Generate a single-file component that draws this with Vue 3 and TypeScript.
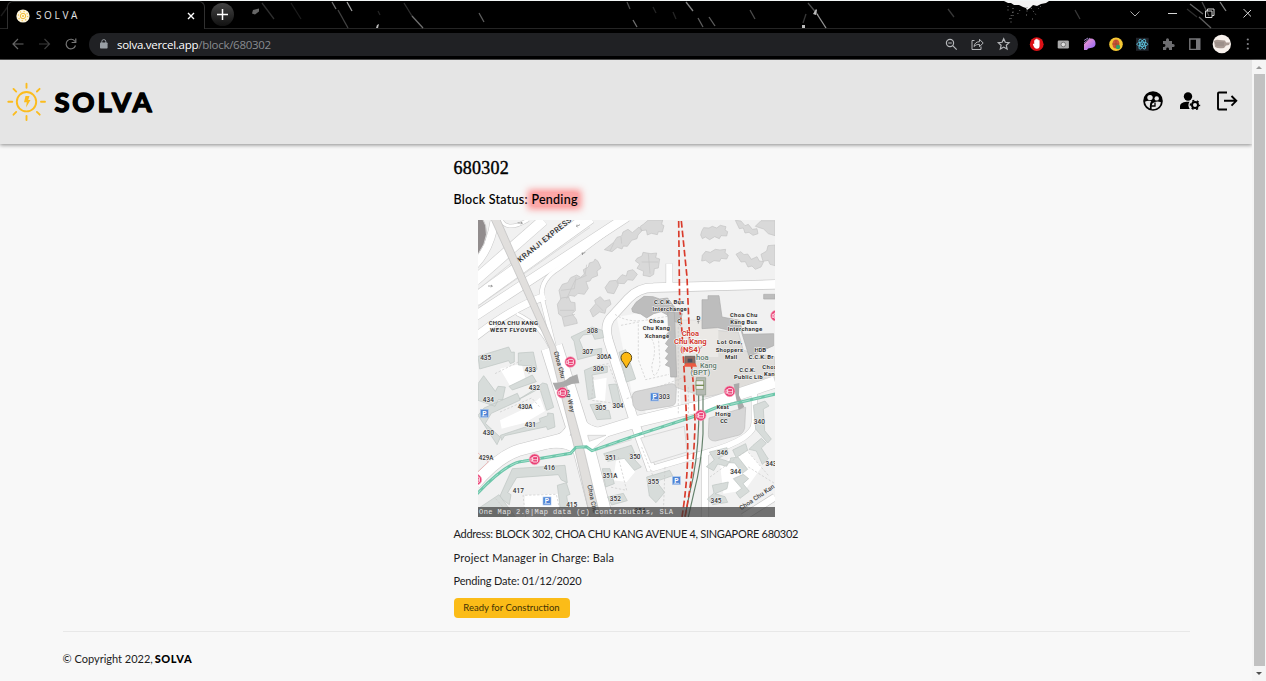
<script setup lang="ts">
interface MapLabel {
  x: number
  y: number
  t: string
  w?: number
}

const numbers: MapLabel[] = [
  { x: 32, y: 428, t: '435' },
  { x: 166, y: 466, t: '433' },
  { x: 178, y: 519, t: '432' },
  { x: 40, y: 556, t: '434' },
  { x: 150, y: 577, t: '430A' },
  { x: 166, y: 631, t: '431' },
  { x: 40, y: 653, t: '430' },
  { x: 33, y: 728, t: '429A' },
  { x: 223, y: 760, t: '416' },
  { x: 130, y: 829, t: '417' },
  { x: 290, y: 869, t: '415' },
  { x: 352, y: 348, t: '308' },
  { x: 338, y: 411, t: '307' },
  { x: 387, y: 427, t: '306A' },
  { x: 370, y: 462, t: '306' },
  { x: 377, y: 579, t: '305' },
  { x: 429, y: 572, t: '304' },
  { x: 568, y: 545, t: '303' },
  { x: 407, y: 730, t: '351' },
  { x: 480, y: 726, t: '350' },
  { x: 405, y: 783, t: '351A' },
  { x: 421, y: 852, t: '352' },
  { x: 535, y: 801, t: '355' },
  { x: 495, y: 888, t: '354' },
  { x: 742, y: 714, t: '346' },
  { x: 782, y: 772, t: '344' },
  { x: 723, y: 859, t: '345' },
  { x: 853, y: 620, t: '340' },
  { x: 888, y: 746, t: '343' },
]

const places: MapLabel[] = [
  { x: 115, y: 323, t: 'CHOA CHU KANG', w: 148 },
  { x: 115, y: 345, t: 'WEST FLYOVER', w: 140 },
  { x: 582, y: 260, t: 'C.C.K. Bus', w: 90 },
  { x: 584, y: 281, t: 'Interchange', w: 103 },
  { x: 544, y: 319, t: 'Choa', w: 44 },
  { x: 544, y: 340, t: 'Chu Kang', w: 82 },
  { x: 546, y: 362, t: 'Xchange', w: 73 },
  { x: 806, y: 299, t: 'Choa Chu', w: 82 },
  { x: 806, y: 321, t: 'Kang Bus', w: 81 },
  { x: 810, y: 343, t: 'Interchange', w: 103 },
  { x: 764, y: 382, t: 'Lot One,', w: 76 },
  { x: 763, y: 404, t: 'Shoppers', w: 82 },
  { x: 768, y: 425, t: 'Mall', w: 36 },
  { x: 856, y: 404, t: 'HDB', w: 35 },
  { x: 858, y: 425, t: 'C.C.K. Br', w: 74 },
  { x: 817, y: 464, t: 'C.C.K.', w: 49 },
  { x: 820, y: 486, t: 'Public Lib', w: 86 },
  { x: 884, y: 455, t: 'Choa', w: 44 },
  { x: 888, y: 477, t: 'Kang', w: 42 },
  { x: 743, y: 575, t: 'Keat', w: 37 },
  { x: 744, y: 597, t: 'Hong', w: 46 },
  { x: 747, y: 618, t: 'CC', w: 22 },
  { x: 613, y: 318, t: 'C', w: 10 },
  { x: 670, y: 310, t: 'D', w: 11 },
]

const busStops = [
  [286, 435], [262, 527], [179, 727], [4, 788], [677, 595], [764, 523], [903, 296],
]
const parking = [
  [28, 589], [216, 852], [539, 540], [604, 791],
]

// x1, y1, x2, y2, opacity
const streaks = [
  [332, 2, 336, 9, 0.6], [347, 2, 352, 11, 0.85], [338, 10, 348, 28, 0.35], [404, 3, 412, 16, 0.25],
  [412, 16, 423, 28, 0.6], [479, 13, 484, 22, 0.5], [627, 2, 630, 9, 0.4], [633, 20, 637, 27, 0.6],
  [653, 7, 656, 13, 0.2], [673, 12, 676, 19, 0.2], [686, 2, 693, 11, 0.7], [698, 18, 703, 27, 0.5],
  [709, 17, 715, 26, 0.5], [750, 10, 755, 19, 0.4], [808, 3, 818, 15, 0.4], [817, 14, 826, 28, 0.8],
  [806, 14, 803, 23, 0.3], [378, 11, 380, 15, 0.2], [262, 3, 274, 19, 0.25], [291, 3, 301, 19, 0.15],
  [948, 9, 954, 17, 0.3], [1075, 10, 1080, 19, 0.3], [1190, 4, 1203, 14, 0.55], [1202, 2, 1209, 16, 0.4],
  [1220, 2, 1226, 11, 0.7], [1199, 17, 1211, 28, 0.5], [1187, 9, 1197, 17, 0.25], [9, 5, 1, 16, 0.15],
]
</script>

<template>
  <div class="window">
    <div class="tabstrip">
      <svg class="theme" width="1266" height="28" viewBox="0 1 1266 28">
        <line v-for="(s, i) in streaks" :key="i" :x1="s[0]" :y1="s[1]" :x2="s[2]" :y2="s[3]" stroke="#bbb" :stroke-opacity="s[4]" stroke-width="1.3" />
        <path d="M253 10l6-1.500v3l-4 3-3-1z" fill="#666" />
        <path d="M376 28l1-3 2-1-1 4zM813 14l3-5 1 1-1 5zM802 25h3v3h-3z" fill="#bbb" />
        <path d="M1004 1h45l-3 2-5 1-4 2-4-1-3 3-3 2-1-2-3-1-4-2-5 0-3-2-3 0z" fill="#f2f2f2" />
        <path d="M1008 6v5m5-3v9m-2 1v6m9-14l-3 5m10-8v6m4-5l5 7m5-9l-3 3m-25 3l-4 8m23-1h3m-9-4h2" fill="none" stroke="#888" stroke-width=".9" stroke-dasharray="1 2.500" />
      </svg>
      <div class="tab">
        <svg width="14" height="14" viewBox="0 0 14 14">
          <circle cx="7" cy="7" r="6.6" fill="#fff6dc" />
          <circle cx="7" cy="7" r="2.7" fill="none" stroke="#f2bd3b" />
          <circle cx="7" cy="7" r="4.7" fill="none" stroke="#f2bd3b" stroke-width="1.1" stroke-dasharray="1.2 2.49" />
          <circle cx="7" cy="7" r="1" fill="#f2bd3b" />
        </svg>
        <span class="tab-title">S O L V A</span>
        <svg width="8" height="8" viewBox="0 0 8 8"><path d="M1 1l6 6M7 1l-6 6" stroke="#fff" stroke-width="1.4" /></svg>
      </div>
      <div class="new-tab">
        <svg width="11" height="11" viewBox="0 0 11 11"><path d="M5.500 0v11M0 5.500h11" stroke="#fff" stroke-width="1.5" /></svg>
      </div>
      <svg class="controls" width="124" height="14" viewBox="1126 7 124 14" fill="none" stroke="#d5d5d5" stroke-width="1">
        <path d="M1129.500 11.500l4.500 4.500 4.500-4.500" stroke="#aaa" />
        <path d="M1167 13.500h9" />
        <path d="M1204.500 11h6.500v6.500h-6.500zM1206.500 11v-2h6.500v6.500h-2" />
        <path d="M1242.500 9l8.500 8.500M1251 9l-8.500 8.500" />
      </svg>
    </div>

    <div class="toolbar">
      <svg class="nav" width="70" height="16" viewBox="10 36 70 16" fill="none" stroke="#666" stroke-width="1.2">
        <path d="M23.500 44h-10M18 39l-5 5 5 5" />
        <path d="M39 44h10M44.500 39l5 5-5 5" stroke="#3c3c3c" />
        <path d="M75 41.500a4.800 4.800 0 1 0 .5 4M75.800 38.500v4h-4.200" stroke="#777" />
      </svg>
      <div class="address">
        <svg width="8" height="10" viewBox="0 0 8 10"><rect y="3.500" width="7.600" height="6" rx=".8" fill="#9aa0a6" /><path d="M1.800 4V2.600a2 2 0 0 1 4 0V4" fill="none" stroke="#9aa0a6" /></svg>
        <span class="url"><b>solva.vercel.app</b>/block/680302</span>
        <svg class="actions" width="68" height="16" viewBox="944 36 68 16" fill="none" stroke="#b5b7ba" stroke-width="1.2">
          <circle cx="950" cy="43" r="3.600" /><path d="M952.700 45.700l4 4M948.200 43h3.600" />
          <path d="M975 40.500h-2.500v9h9v-3M974.500 46.500c.4-3.500 3-4.800 5.500-4.800v-2.400l3.700 3.700-3.700 3.700v-2.300c-2.500 0-4 .5-5.500 2.100z" transform="translate(-.5)" stroke-width="1" />
          <path d="M1003.700 38.800l1.600 3.500 3.800.4-2.800 2.600.8 3.800-3.400-2-3.400 2 .8-3.800-2.800-2.600 3.800-.4z" />
        </svg>
      </div>
      <svg class="extensions" width="228" height="20" viewBox="1028 34 228 20">
        <circle cx="1036.700" cy="44.200" r="6.900" fill="#db1116" />
        <path d="M1033.200 43.500l1 .8v-4h1v-1h1.100v-.5h1.100v.6h1.100v.8h1.100v5.300q0 3.300-2.700 3.300t-4-4.200z" fill="#fff" />
        <rect x="1057.700" y="40.500" width="11.200" height="8" rx="1.200" fill="#aaa" /><circle cx="1063.300" cy="44.500" r="2.300" fill="#ddd" stroke="#666" stroke-width=".8" />
        <defs><linearGradient id="petal" x2="1" y2="1"><stop stop-color="#ffa0c6" /><stop offset="1" stop-color="#8961ff" /></linearGradient></defs>
        <path d="M1084 50v-6l6-5.500h1q4 0 4.500 4.500t-5 5q-3 0-3.500 2z" fill="url(#petal)" />
        <path d="M1084 40.500l4-2.500M1084 43l6-5" stroke="#bfa0ed" stroke-width=".8" />
        <circle cx="1116" cy="44.200" r="6.800" fill="#f6c934" /><ellipse cx="1116" cy="44" rx="3.500" ry="4.600" fill="#cf5339" /><path d="M1116 40v8M1112 44h7" stroke="#8a4c22" stroke-width=".6" /><circle cx="1118" cy="47" r="2.200" fill="#31a066" />
        <rect x="1136" y="37.800" width="12.700" height="13" fill="#20232a" />
        <g fill="none" stroke="#61cfeb" stroke-width=".8"><ellipse cx="1142.300" cy="44.200" rx="5.500" ry="2.100" /><ellipse cx="1142.300" cy="44.200" rx="5.500" ry="2.100" transform="rotate(60 1142.300 44.200)" /><ellipse cx="1142.300" cy="44.200" rx="5.500" ry="2.100" transform="rotate(120 1142.300 44.200)" /></g><circle cx="1142.300" cy="44.200" r="1" fill="#61cfeb" />
        <path d="M1163 41h3v-1.200a1.500 1.500 0 0 1 3 0V41h3v3h1.200a1.500 1.500 0 0 1 0 3H1172v3h-3v-1a1.400 1.400 0 0 0-2.800 0v1H1163v-3h1a1.400 1.400 0 0 0 0-2.900h-1z" fill="#6d6d70" />
        <path d="M1189.800 39h10v10.400h-10z" fill="none" stroke="#77777a" stroke-width="1.400" /><path d="M1196 39h4v10.400h-4z" fill="#77777a" />
        <circle cx="1221.800" cy="44" r="9.200" fill="#f8f1ec" /><path d="M1214 41q3-2 5-1l6 .500 1 2h4l-1 2.500-3 .5-2 2.500q-6 1-9-1z" fill="#a99a93" /><path d="M1215 43h9M1216 45h8" stroke="#857a75" stroke-width=".6" />
        <g fill="#85858a"><circle cx="1247.800" cy="39.500" r="1.100" /><circle cx="1247.800" cy="44" r="1.100" /><circle cx="1247.800" cy="48.500" r="1.100" /></g>
      </svg>
    </div>

    <div class="viewport">
      <div class="page">
        <header>
          <svg class="logo" width="160" height="50" viewBox="0 77 160 50">
            <g fill="none" stroke="#fbbc1e" stroke-width="1.900" stroke-linecap="round">
              <circle cx="26.500" cy="101.700" r="9.700" />
              <path d="M26.500 83.700v4M26.500 116v4M8.300 101.700h4M41 101.700h4M13.500 88.900l2.700 2.700M36.900 91.500l2.700-2.700M13.500 114.700l2.700-2.800M36.900 111.900l2.800 2.800" />
            </g>
            <path d="M25.500 96h4l-1.300 4h2.300l-4.500 7.500.8-5.200h-2.800z" fill="#fbbc1e" />
            <text class="wordmark" x="54.500" y="111.600" textLength="97" lengthAdjust="spacing">SOLVA</text>
          </svg>
          <nav>
            <svg width="22" height="22" viewBox="0 0 22 22">
              <circle cx="11" cy="11" r="9.800" />
              <g fill="#e5e5e5"><circle cx="8" cy="7.600" r="2.700" /><circle cx="14.700" cy="8.400" r="2.200" /><path d="M3 11.800q3.200-1.800 6.300-.6-1.700 1.500-1.500 5.300l.2 2q-4.200-1.800-5-6.700zM10.300 13.500q4-3.300 8.600-1.300-.7 5-5.900 6.800l-3.300.2q-.6-3.500.6-5.700z" /></g>
              <path d="M13 12.500v3.500h-4" fill="none" stroke="#000" stroke-width="1.300" />
            </svg>
            <svg width="22" height="22" viewBox="0 0 22 22">
              <circle cx="9" cy="6.500" r="4.200" /><path d="M1 19v-3q0-3.500 6.500-4.300l3 .1q-2.300 3.500.2 7.200z" />
              <g fill="none" stroke="#000"><circle cx="16" cy="15" r="3" stroke-width="2" /><circle cx="16" cy="15" r="4.500" stroke-width="1.500" stroke-dasharray="2.100 2.612" stroke-dashoffset="1" /></g>
            </svg>
            <svg width="22" height="22" viewBox="0 0 22 22" fill="none" stroke="#000" stroke-width="1.900">
              <path d="M11 2.500H3q-1 0-1 1v15q0 1 1 1h8M8 10.800h12M15.500 6l4.800 4.800-4.800 4.900" />
            </svg>
          </nav>
        </header>

        <main>
          <h1>680302</h1>
          <h2>Block Status: <span class="pending">Pending</span></h2>
          <svg class="map" width="297" height="297" viewBox="9 9 891 891">
            <rect x="9" y="9" width="891" height="891" fill="#f1f1f1" />
            <!-- expressway -->
            <g fill="none" stroke="#c9c9c9">
              <path d="M0 190L205 10" stroke-width="34" />
              <path d="M0 248L345 0" stroke-width="42" />
              <path d="M0 297L455 0" stroke-width="30" />
              <path d="M0 360Q115 270 210 238" stroke-width="25" />
              <path d="M60 0Q50 90 0 143" stroke-width="27" />
              <path d="M75 0Q90 50 160 8" stroke-width="12" />
              <path d="M450 5L250 155Q185 195 205 260L240 400" stroke-width="15" />
              <path d="M125 290Q200 325 230 400" stroke-width="12" />
            </g>
            <g fill="none" stroke="#fff">
              <path d="M0 190L205 10" stroke-width="31" />
              <path d="M0 248L345 0" stroke-width="39" />
              <path d="M0 297L455 0" stroke-width="27" />
              <path d="M0 360Q115 270 210 238" stroke-width="22" />
              <path d="M60 0Q50 90 0 143" stroke-width="24" />
              <path d="M75 0Q90 50 160 8" stroke-width="9" />
              <path d="M450 5L250 155Q185 195 205 260L240 400" stroke-width="12" />
              <path d="M125 290Q200 325 230 400" stroke-width="9" />
            </g>
            <path d="M0 0H20Q54 50 9 112H0z" fill="#918c8d" stroke="#d5d5d5" stroke-width="3" />
            <path d="M0 274L345 31M0 225L150 105" stroke="#d2d2d2" stroke-width="2" />
            <!-- light precinct surfaces -->
            <path d="M425 300L540 280 605 300 610 490 470 525zM490 490L610 475 620 590 515 600z" fill="#fafafa" />
            <path d="M600 310H720V340L790 345 805 400 900 420V500L690 540 600 510z" fill="#dfddda" stroke="#c8c8c8" stroke-width="2" />
            <path d="M620 310h110v110H620z" fill="#ebe9e6" />
            <path fill="#fff" d="M75 455l65-15 15 60-45 15zM75 610l90-43 30-25 15 40-60 35-70 18zM150 835l100-5 15 70H145zM355 490l40-8-5 70-40-5zM425 715l35 5 20 45-25 30-40-5zM735 740l80-40 45 50-50 70-65 10z" />
            <!-- local roads -->
            <g fill="none" stroke="#c9c9c9" stroke-linejoin="round">
              <path d="M0 800Q70 720 130 700L285 660 350 655 480 615 690 565 900 495" stroke-width="37" />
              <path d="M910 202L535 212Q490 212 460 245L405 305Q388 328 400 370L480 620 530 760" stroke-width="30" />
              <path d="M583 140V207" stroke-width="22" />
              <path d="M530 755L700 705Q840 665 838 615V510" stroke-width="20" />
              <path d="M690 710V900M900 840L805 900" stroke-width="24" />
              <path d="M230 390L325 690 380 900" stroke-width="68" />
              <path d="M215 665Q275 655 283 600L318 580Q325 645 430 632L360 690Q330 690 345 740L315 750Q305 680 215 695z" stroke-width="3" />
            </g>
            <g fill="none" stroke="#fff" stroke-linejoin="round">
              <path d="M230 390L325 690 380 900" stroke-width="64" />
              <path d="M0 800Q70 720 130 700L285 660 350 655 480 615 690 565 900 495" stroke-width="34" />
              <path d="M910 202L535 212Q490 212 460 245L405 305Q388 328 400 370L480 620 530 760" stroke-width="26" />
              <path d="M583 140V207" stroke-width="19" />
              <path d="M530 755L700 705Q840 665 838 615V510" stroke-width="17" />
              <path d="M690 710V900M900 840L805 900" stroke-width="20" />
              <path d="M215 665Q275 655 283 600L318 580Q325 645 430 632L360 690Q330 690 345 740L315 750Q305 680 215 695z" fill="#fff" stroke="none" />
            </g>
            <path d="M285 655l12-18 8 14zM338 655l55 0-50 18zM470 668l-105 32" fill="#eee" stroke="#ccc" stroke-width="2" />
            <path d="M497 663L628 628 636 705 528 738Z" fill="#f1f1f1" stroke="#ccc" stroke-width="2" />
            <path d="M45 0H72L242 390 325 690 376 900H345L300 700 222 390z" fill="#e1dfdd" stroke="#bbb" stroke-width="2" />
            <!-- towers -->
            <g fill="#d9d9d9" stroke="#c2c2c2" stroke-width="2" stroke-linejoin="round">
              <path d="M252 220l10-18 16-5 9-15 18-8 12 7 11-10-3-13 15-8 3-12 13-4 4-8 9 7 9 20-12 9 2 14-18 7-5 9-12 2 7 20-12 18-19-3-9 9-17-3-6 17-18 2z" />
              <path d="M247 262l12-19 22-3 6 15 13 2 1 24-10 9 13 17 3 12-39 9-7-30-10-7zM345 280l17-20-3-10 17-11 12 13 16-4 4 14-15 12-3 15-16-4-20 15zM390 212l14-20 20-2 6 14-13 26-19-3z" />
              <path d="M388 98l28-22 10-15 14-4 4-12 15-8 13 10 20-17 9 11-12 13-3 11-16 5-13 18-12-1-4 9-14-5-16 13zM505 22l15-13h43l-3 13 7 4-5 19-12-1-3 9-18-4-12 5-3-15-15 2-3-13z" />
              <path d="M427 188l14-15 13 4 4-15 16-4 13 14-13 18-16-2-10 12-19-1zM486 124l15-7 3-11 24 4 17-2-3 14 12 4-4 27-12 2-2 17-11 7-21-4 2-12-20-9 8-13-13-9z" />
              <path d="M680 43l6-11 16 1 10-5 13 5 11-8 17 4-3 10 8 5-3 13-17-1-5 9-14-6-15 9-13-8-9 5-5-11zM682 115l10-12 14 3 15-9 14 2 17-2-2 10 10 8-5 11-17-2-4 9-17-2-13 8-12-9-12 2z" />
              <path d="M781 10l17 2 12 14 10-4 12 15 14-2 3 15-15 5-12-9-12 2-5-15-12 2zM783 112l14-8 10 9 11-2 11 16 17-8 7 13 13 2-8 16-17 7-10-10-12 3-8-16-13 1-6-10zM841 28l17-17h42v45l-20-6-14-14zM858 112l17-10 4-16 21-2v62l-15-4-5-12-16 3z" />
            </g>
            <path d="M258 220l40-5 5-35M275 245l25-55 35-15M330 175l5-32M255 280h42M265 300l35-8M405 102l12-25M440 80l-2-20M365 262l20 20M500 135h50M520 110l5 60" fill="none" stroke="#c5c5c5" stroke-width="2" />
            <!-- slab blocks -->
            <g fill="#d7dcda" stroke="#bcc4c1" stroke-width="2">
              <path d="M9 418l92-28 8 16 9-1v30l-12 5-5-9-87 25zM130 408l45-3 11 52-25 12 9-22-40-3zM9 500l17-24 35 47 8-15 22 2-8 38H70l-10 20L9 550zM102 508l70-34 12 20-72 25zM132 546l33-20 38-28 13 3 20 70-21 9-21-66-52 28zM9 595l18-22 100-44 9 20-87 40-18 30 45 42-10 22zM76 655l120-40-3-10 25-9v-8l17 2 5 40-22 8-4-9-125 27-9 14zM112 755l158-10 7 52-18-8-9-16-125 9-27 45 10 6-5 30-30-22zM247 805l27-8 11 35-10 4 5 35h-25z" />
              <path d="M288 360l63-30 31 10 4 22-27 5-7-17-28 4-11 14 14 35 53-9v15l-72 19-11-55zM328 460l33-14 36 2v18l-46 8 10 68-21 6zM401 503l24-2 14 60-24 3zM345 563l33-4-6 20 30 1 6 25-42 3zM386 710l83-25 10 23-16 2 36 40-21 10-30-36-50 9zM382 755h23l13 45-26 10zM515 780l69-20 9 16-49 17 25 33-26 31-20-20zM398 840l47-11 12 22-47 13z" />
              <path d="M703 705l53-13 3 17-29 15 33 10-8 14-27-7-12 20-22-12 24-20zM773 699l39-19 6 20-30 19 30 38-16 12-23-31-16-1 4-14 16-2zM834 685l25-21 15 15-15 14 21 33-18 16-18-40-22-5zM712 805l48-10-4 20-36 15 30 9 8 17-45 7-16-17 20-18zM775 785l30-13 16 13-17 15 19 23-28 21-12-17 17-13z" />
              <path d="M835 565l35-13 12 15-17 9 4 65 20 25-11 12-36-42zM432 406l20-8 30 88-28 9zM9 875l63-42 50 68H9z" />
            </g>
            <g fill="none" stroke="#c8c8c8" stroke-width="2" stroke-dasharray="7 5">
              <path d="M420 292Q465 323 535 305L603 294M438 325l52-10V428l22 60 70-16M530 365q17 30 0 80 5 60 25 0l-5-90M610 330V590M640 510v80M455 545l175-65M62 845L110 900M152 900l-8-65 100-3 15 68M705 780l110-80 65 75M820 750l80 50M430 720l25 100-50-10M355 480l-5 70 62 8M60 470l80-40M75 585l95-42 25 28M370 445l30-5 23 60M500 690l35 90M570 750l-5 140" />
            </g>
            <path d="M0 700l40 35-40 38" fill="none" stroke="#eda5a5" stroke-width="2" />
            <!-- large commercial blocks -->
            <g fill="#bdbdbd" stroke="#aaa" stroke-width="2">
              <path d="M470 275l13-19 24-18 27 1 20 7 24-3 20 27 24 20-8 27-25-5-12-18-18-10-23 6-21 13-18-12-24-6z" />
              <path d="M578 285h20l7 195h-18l-2-30-14-6 10-12-10-8 10-14-10-8 10-14-10-8 10-14-10-8 10-14z" />
              <path d="M681 248h18v-12h33l9 64 53 10 10 42 92-2v36l-74 32-24-78h-35l-35-8-47 3z" />
              <path d="M866 232h34v14h-34z" />
            </g>
            <g fill="#d6d6d6" stroke="#bebebe" stroke-width="2">
              <path d="M472 535q3-11 14-12l103-23q14 0 15 15l-2 37q0 12-13 15l-90 14q-17 0-25-17zM702 603l92-27 18-5-3 63q-6 21-28 23l-60 15q-22 0-21-20z" />
            </g>
            <path fill="#aaa" d="M233 497q25 2 40-8 15-12 34-17l6 27q-22-1-39 9-17 5-31 12zM776 502l17-4-1 37 16 35-17 9-8-36z" />
            <!-- park connector -->
            <path d="M0 837Q95 735 145 733L287 709 303 691 334 689 351 701 483 655 670 594 720 573 910 529" fill="none" stroke="#6dc6aa" stroke-width="9" />
            <path d="M0 837Q95 735 145 733L287 709 303 691 334 689 351 701 483 655 670 594 720 573 910 529" fill="none" stroke="#a4dfcc" stroke-width="3" stroke-dasharray="25 10" />
            <!-- rail -->
            <path d="M671 535V620Q668 735 643 832L630 900M684 535V650Q680 737 656 830L640 900" fill="none" stroke="#63806a" stroke-width="3.500" />
            <path d="M664 482h28v52h-28z" fill="#b5bab3" stroke="#8b988a" stroke-width="2" /><path d="M663 491h23v26h-23z" fill="#eee" stroke="#748c51" stroke-width="2" /><path d="M662 505h25" stroke="#748c51" stroke-width="4" />
            <g fill="none" stroke="#d93b2b" stroke-width="5" stroke-dasharray="20 9">
              <path d="M611 12L614 270 620 330 628 470 638 670Q640 780 621 900" /><path d="M619 12L636 180 645 400 655 500 660 610Q658 760 630 900" />
            </g>
            <path d="M630 418h30v24h-30z" fill="#8c6b61" stroke="#6d6a64" stroke-width="3" /><path d="M626 449h40l-5-10h-30z" fill="#ed5a42" /><path d="M638 425h14v11h-14z" fill="#49505d" />
            <g class="numbers"><text v-for="n in numbers" :key="n.t" :x="n.x" :y="n.y" :textLength="n.t.length * 11" lengthAdjust="spacingAndGlyphs">{{ n.t }}</text></g>
            <g class="places"><text v-for="(p, i) in places" :key="i" :x="p.x" :y="p.y" :textLength="p.w" lengthAdjust="spacing">{{ p.t }}</text></g>
            <g class="lrt"><text x="682" y="428" textLength="38" lengthAdjust="spacingAndGlyphs">hoa</text><text x="700" y="453" textLength="50" lengthAdjust="spacingAndGlyphs">Kang</text><text x="676" y="475" textLength="60" lengthAdjust="spacingAndGlyphs">(BPT)</text></g>
            <g class="mrt"><text x="646" y="357" textLength="52" lengthAdjust="spacingAndGlyphs">Choa</text><text x="646" y="380" textLength="98" lengthAdjust="spacingAndGlyphs">Chu Kang</text><text x="646" y="404" textLength="61" lengthAdjust="spacingAndGlyphs">(NS4)</text></g>
            <text class="express" transform="translate(136 137) rotate(-39)" textLength="207">KRANJI EXPRESS.</text>
            <text class="road" transform="translate(236 405) rotate(74)" textLength="83">Choa Chu</text>
            <text class="road" transform="translate(272 519) rotate(78)" textLength="69">ng Way</text>
            <text class="road" transform="translate(337 805) rotate(78)" textLength="85">Choa Chu</text>
            <text class="road" transform="translate(799 880) rotate(-34)" textLength="122">Choa Chu Kan</text>
            <g fill="none" stroke="#777" stroke-width="2">
              <path d="M128 18h14m-4-3 4 3-4 4M305 28l10-5m-7 8-3-3 1-5M321 111l10-5m-7 8-3-3 1-5M39 207h13m-4-3 4 3-4 4M670 320v-8m-3 3 3-4 3 4M612 320l5 6M676 395l5-7" />
            </g>
            <g v-for="(b, i) in busStops" :key="'b' + i" :transform="`translate(${b[0]} ${b[1]})`">
              <circle r="16" fill="#ea3f74" stroke="#f5a2ba" stroke-width="2" /><rect x="-6" y="-8" width="15" height="16" rx="3" fill="none" stroke="#fff" stroke-width="2.500" /><path d="M-6 1H9M-11-4h5M-11-4v10M-11 5h5" fill="none" stroke="#fff" stroke-width="2" />
            </g>
            <g v-for="(p, i) in parking" :key="'p' + i" :transform="`translate(${p[0]} ${p[1]})`">
              <rect x="-12" y="-12" width="24" height="24" fill="#4e83d4" stroke="#afc9ee" stroke-width="2" /><text class="park" y="7">P</text><path d="M-8 8H9" stroke="#fff" stroke-width="2" />
            </g>
            <path d="M454 453L444 436Q438 431 438 422a16 16 0 0 1 32 0q0 9-6 14z" fill="#fdb913" stroke="#5c4a18" stroke-width="3" />
            <rect x="9" y="870" width="891" height="30" fill="#333" fill-opacity=".68" />
            <text class="credit" x="12" y="892" textLength="582">One Map 2.0|Map data (c) contributors, SLA</text>
          </svg>
          <p class="location">Address: BLOCK 302, CHOA CHU KANG AVENUE 4, SINGAPORE 680302</p>
          <p class="manager">Project Manager in Charge: Bala</p>
          <p class="date">Pending Date: 01/12/2020</p>
          <button type="button">Ready for Construction</button>
        </main>

        <footer><span>© Copyright 2022, </span><b>SOLVA</b></footer>
      </div>
      <div class="scrollbar">
        <svg width="14" height="14" viewBox="0 0 14 14"><path d="M4 9l3-3 3 3z" fill="#999" /></svg>
        <div class="thumb"></div>
        <svg width="14" height="14" viewBox="0 0 14 14"><path d="M4 5l3 3 3-3z" fill="#505050" /></svg>
      </div>
    </div>
  </div>
</template>

<style>
body {
  overflow: hidden;
}
</style>

<style scoped>
* {
  box-sizing: border-box;
}
svg {
  display: block;
  flex: none;
}
.window {
  width: 1266px;
  height: 681px;
  display: flex;
  flex-direction: column;
  background: #f8f8f8;
  font-family: Lato, "Open Sans", sans-serif;
  color: #1c1c1c;
}
.tabstrip {
  position: relative;
  height: 29px;
  border-top: 1px solid #f2f6f6;
  border-bottom: 1px solid #252525;
  background: #000;
  display: flex;
  align-items: flex-start;
}
.theme {
  position: absolute;
  top: 0;
  left: 0;
}
.tab {
  position: relative;
  width: 198px;
  height: 28px;
  margin-left: 7px;
  padding: 0 9px 0 8px;
  border: 1px solid #303030;
  border-bottom: 0;
  border-radius: 6px 6px 0 0;
  background: #000;
  display: flex;
  align-items: center;
}
.tab-title {
  flex: 1;
  margin: -2px 0 0 6px;
  color: #e4e4e4;
  font: 10px "Open Sans", sans-serif;
  letter-spacing: 0.02px;
}
.new-tab {
  position: relative;
  width: 23px;
  height: 23px;
  margin: 2px 0 0 6px;
  border-radius: 50%;
  background: linear-gradient(#444, #111);
  display: grid;
  place-items: center;
}
.controls {
  position: relative;
  margin: 6px 15px 0 auto;
}
.toolbar {
  height: 31px;
  background: #000;
  border-bottom: 1px solid #555;
  display: flex;
  align-items: center;
  padding: 0 10px;
}
.address {
  width: 929px;
  height: 23px;
  margin-left: 9px;
  padding: 0 6px 0 11px;
  border-radius: 12px;
  background: #202124;
  display: flex;
  align-items: center;
}
.url {
  margin-left: 9px;
  color: #888b8f;
  font: 11.5px "Open Sans", sans-serif;
  letter-spacing: -0.28px;
}
.url b {
  color: #fff;
  font-weight: 400;
}
.actions {
  margin-left: auto;
}
.extensions {
  margin-left: 10px;
}
.viewport {
  flex: 1;
  display: flex;
  min-height: 0;
}
.page {
  width: 1252px;
}
header {
  height: 84px;
  background: #e5e5e5;
  box-shadow: 0 1px 4px rgba(0, 0, 0, 0.45);
  display: flex;
  justify-content: space-between;
  align-items: center;
  padding-right: 14px;
}
nav {
  display: flex;
  gap: 15px;
  margin-bottom: 2px;
}
main {
  height: 487px;
  padding: 13px 0 0 453.500px;
}
h1 {
  height: 22px;
  margin: 0 0 11px;
  font: 18px/22px "Liberation Serif", serif;
  letter-spacing: 0.25px;
  color: #000;
  -webkit-text-stroke: 0.4px #000;
}
h2 {
  height: 20px;
  margin: 0 0 10px;
  font: 500 12.500px/20px Lato, sans-serif;
  letter-spacing: 0.27px;
  color: #000;
  -webkit-text-stroke: 0.1px #000;
}
.pending {
  display: inline-block;
  height: 13px;
  line-height: 13px;
  background: rgba(255, 100, 100, 0.55);
  box-shadow: 0 0 7px 3px rgba(255, 85, 85, 0.65);
}
.map {
  margin: 0 0 5px 24.500px;
}
text {
  font-family: Roboto, sans-serif;
}
.numbers text,
.places text,
.mrt text,
.lrt text {
  text-anchor: middle;
  font-size: 19px;
  font-weight: 500;
  fill: #333;
  stroke: #f5f5f5;
  stroke-width: 3px;
  paint-order: stroke;
}
.places text {
  font-size: 18px;
  font-weight: 700;
}
.mrt text {
  font-size: 20px;
  font-weight: 700;
  fill: #d13a30;
  stroke: #fff;
}
.lrt text {
  fill: #5d796a;
}
.express {
  font-size: 23px;
  font-weight: 500;
  fill: #333;
}
.road {
  font-size: 19px;
  font-weight: 500;
  fill: #444;
}
.park {
  font-size: 20px;
  font-weight: 700;
  fill: #fff;
  text-anchor: middle;
}
text.credit {
  font: 21px "Liberation Mono", monospace;
  fill: #e5e5e5;
}
text.wordmark {
  font: 700 27.500px Lato, sans-serif;
  stroke: #000;
  stroke-width: 1.500px;
  stroke-linejoin: round;
}
p {
  height: 23.700px;
  margin: 0;
  font-size: 11px;
  line-height: 23.700px;
}
.location {
  letter-spacing: -0.3px;
}
.manager {
  letter-spacing: 0.21px;
}
.date {
  letter-spacing: -0.15px;
}
button {
  display: block;
  width: 116px;
  height: 20px;
  margin-top: 5px;
  padding: 0;
  border: 0;
  border-radius: 4px;
  background: #fbbc18;
  color: #423105;
  font: 9.500px/18px Lato, sans-serif;
}
footer {
  width: 1127px;
  margin-left: 62.500px;
  padding-top: 17px;
  border-top: 1px solid #e8e8e8;
  font-size: 11px;
  line-height: 20px;
  white-space: pre;
}
footer b {
  color: #000;
  font-weight: 900;
  letter-spacing: 0.6px;
  margin-left: -1px;
}
.scrollbar {
  width: 14px;
  background: #f5f5f5;
  display: flex;
  flex-direction: column;
}
.thumb {
  flex: 1;
  margin: 0 1px 1px 2px;
  background: #c1c1c1;
}
</style>
